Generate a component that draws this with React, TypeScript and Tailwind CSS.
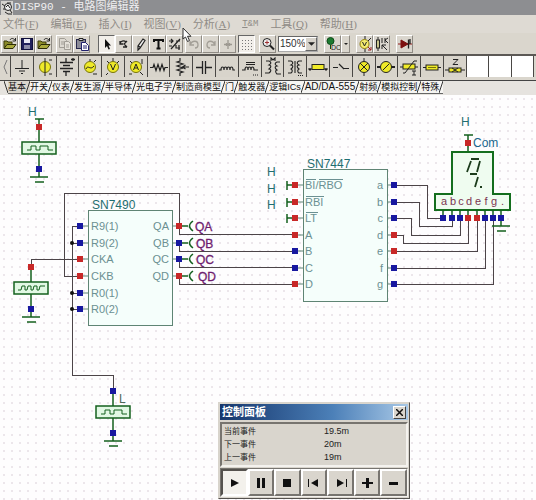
import { useState } from "react"
import type { ReactNode } from "react"
import { clsx } from "clsx"

const RED = "#c82828"
const BLUE = "#1818a0"
const WIRE = "#4c4448"
const GREEN = "#14601e"

const MENUS = [
  { label: "文件", hotkey: "F" },
  { label: "编辑", hotkey: "E" },
  { label: "插入", hotkey: "I" },
  { label: "视图", hotkey: "V" },
  { label: "分析", hotkey: "A" },
  { label: "T&M", hotkey: "" },
  { label: "工具", hotkey: "Q" },
  { label: "帮助", hotkey: "H" },
]

const TABS = [
  "基本",
  "开关",
  "仪表",
  "发生源",
  "半导体",
  "光电子学",
  "制造商模型",
  "门",
  "触发器",
  "逻辑ICs",
  "AD/DA-555",
  "射频",
  "模拟控制",
  "特殊",
]

/* ---------- toolbar icons, 16x16 ---------- */

function Icon({ children }: { children: ReactNode }) {
  return (
    <svg width="16" height="16" viewBox="0 0 16 16" fill="none" stroke="#222" className="shrink-0">
      {children}
    </svg>
  )
}

const openIcon = (
  <Icon>
    <path d="M2 12V5h3l1 1h4v2" fill="#8b8b2a" stroke="#3a3a08" />
    <path d="M2 12.500l3-4h9l-3 4z" fill="#a9a93c" stroke="#2c2c08" />
    <path d="M8 4c1-2 3-2 5 0M13.500 2v3h-3" />
  </Icon>
)
const saveIcon = (
  <Icon>
    <rect x="2.500" y="2.500" width="11" height="11" fill="#20205c" stroke="#10103c" />
    <rect x="5" y="3" width="6" height="4" fill="#e8e8f4" stroke="none" />
    <rect x="5" y="9" width="6" height="4" fill="#8c8ca8" stroke="none" />
  </Icon>
)
const copyIcon = (
  <Icon>
    <g stroke="#a19d95">
      <path d="M2.500 2.500h5l2 2v7h-7z" fill="#dedad2" />
      <path d="M7.500 5.500h4l2 2v6h-6z" fill="#e6e2da" />
      <path d="M4 6h3M4 8h3M9 9h3M9 11h3" />
    </g>
  </Icon>
)
const pasteIcon = (
  <Icon>
    <rect x="2.500" y="3.500" width="9" height="9" fill="#8c8c98" stroke="#26264c" />
    <path d="M5 2.500h4v2H5z" fill="#d8d8d8" />
    <path d="M7.500 6.500h4l3 3v5h-7z" fill="#fff" stroke="#20206c" />
    <path d="M9 10h4M9 12h4" stroke="#20206c" />
  </Icon>
)
const pointerIcon = (
  <Icon>
    <path d="M6 3v9l2-2 1.500 3.500 1.500-.6-1.500-3.300H12z" fill="#111" stroke="none" />
  </Icon>
)
const rotateIcon = (
  <Icon>
    <path d="M4 8c0-3 4-4 6-2M4 5v3h3M11 5l-3 3 3 3M7 11h4" strokeWidth="1.300" />
  </Icon>
)
const pencilIcon = (
  <Icon>
    <path d="M6 13l-1 1V10l5-7 2 1.500-5 7.500zM5.500 10l2 1.500" fill="#eee" strokeWidth="1.200" />
  </Icon>
)
const textIcon = (
  <Icon>
    <path d="M4 6V4h9v2M8.500 4v8M6.500 12.500h4" strokeWidth="2" stroke="#111" />
  </Icon>
)
const fractionIcon = (
  <Icon>
    <path d="M2 5h4M4 3l2 2-2 2M13 3L4 13M9 5h4M9 9v3h4M12 9v5M2 10h3" strokeWidth="1.200" />
  </Icon>
)
const undoIcon = (
  <Icon>
    <path d="M4 5v4h4M4 9c2-5 8-5 8 0 0 2-1 3-3 3" stroke="#a29e96" strokeWidth="1.300" />
  </Icon>
)
const redoIcon = (
  <Icon>
    <path d="M12 5v4H8M12 9C10 4 4 4 4 9c0 2 1 3 3 3" stroke="#a29e96" strokeWidth="1.300" />
  </Icon>
)
const moveIcon = (
  <Icon>
    <path d="M8 4v9M4 8.500h8M6.500 7v3M9.500 7v3" stroke="#9c9890" strokeWidth="1.300" />
  </Icon>
)
const gridIcon = (
  <Icon>
    <path d="M3 4.500h11M3 7.500h11M3 10.500h11M3 13.500h11" stroke="#777" strokeDasharray="1 2" />
  </Icon>
)
const magnifierIcon = (
  <Icon>
    <circle cx="7" cy="6.500" r="4" fill="#eee" />
    <path d="M5 6.500h4M7 4.500v4" stroke="#a03030" />
    <path d="M10 9.500l4 4" strokeWidth="2" />
  </Icon>
)
const dcIcon = (
  <Icon>
    <circle cx="5.500" cy="5" r="3.500" fill="#1c7a30" stroke="#0c4c18" />
    <path d="M5.500 9v4" stroke="#0c4c18" />
    <text x="6" y="14" fontSize="7" fill="#222" stroke="none">
      DC
    </text>
  </Icon>
)
const meterIcon = (
  <Icon>
    <path d="M8 0v3M8 13v3" />
    <circle cx="7.500" cy="8" r="4.500" fill="#f4ec70" stroke="#8c7c08" />
    <path d="M5.500 6l2 4 2-4M11 5l3-3" />
    <path d="M11 11l3 3M14 11v3h-3" stroke="#a02020" />
  </Icon>
)
const partIcon = (
  <Icon>
    <path d="M4 1v3M4 12v3" />
    <rect x="2.500" y="4" width="3" height="8" fill="#c8c48c" />
    <path d="M8 2v5M11 2v5M14 2l-3 2 3 3M8 9l5 5M8 13V9h4" />
  </Icon>
)
const diodeIcon = (
  <Icon>
    <path d="M1 8h14" stroke="#901818" />
    <path d="M4 4l7 4-7 4z" fill="#7c1010" stroke="#7c1010" />
    <path d="M11.500 3.500v9M13 3v5" stroke="#222" strokeWidth="1.300" />
  </Icon>
)

/* ---------- component palette icons, 22x20 ---------- */

const YELLOW = "#efea28"

const PARTS: { name: string; art: ReactNode }[] = [
  { name: "Ground", art: <path d="M11 3v8M4 11.500h14M8 14h6M10 16.500h2" /> },
  {
    name: "Voltage source",
    art: (
      <>
        <circle cx="11" cy="10" r="5.500" fill={YELLOW} stroke="#77740c" />
        <path d="M11 1v18M15 3h3M15 17h3" />
      </>
    ),
  },
  {
    name: "Battery",
    art: <path d="M10 1v4M4 5.500h13M7 8.500h7M4 11.500h13M7 14.500h7M10 15v4M15 2.500h4M17 1v3" strokeWidth="1.300" />,
  },
  {
    name: "Sine generator",
    art: (
      <>
        <circle cx="11" cy="10" r="5.500" fill={YELLOW} stroke="#77740c" />
        <path d="M7 12c2-5 4 2 8-3M15 5l2-2M14 17h4M11 2v2" />
      </>
    ),
  },
  {
    name: "Voltmeter",
    art: (
      <>
        <circle cx="11" cy="10" r="5.500" fill={YELLOW} stroke="#77740c" />
        <path d="M8.500 7l2.500 6 2.500-6M5 4l2 2M17 4l-2 2M11 1v3M6 16l-2 2" />
      </>
    ),
  },
  {
    name: "Ammeter",
    art: (
      <>
        <circle cx="11" cy="10" r="5.500" fill={YELLOW} stroke="#77740c" />
        <path d="M8.500 13L11 7l2.500 6M9.500 11h3M17 2v5M5 4l2 2M15 15l3 3M4 17h3" />
      </>
    ),
  },
  { name: "Resistor", art: <path d="M2 10.500h3l1-3 2 6 2-6 2 6 2-6 2 6 1-3h3" strokeWidth="1.200" /> },
  {
    name: "Potentiometer",
    art: <path d="M10 1v3l-3 1 6 2-6 2 6 2-6 2 6 2-3 1v3M19 10h-6M15.500 8l-3 2 3 2" strokeWidth="1.200" />,
  },
  { name: "Capacitor", art: <path d="M3 10.500h6M13 10.500h6M9.500 4v13M12.500 4v13" strokeWidth="1.300" /> },
  {
    name: "Inductor",
    art: <path d="M3 13h2c0-4 3-4 3 0 0-4 3-4 3 0 0-4 3-4 3 0 0-4 3-4 3 0h2" strokeWidth="1.200" />,
  },
  {
    name: "Iron core coil",
    art: (
      <>
        <path d="M7 5.500h9M7 7.500h9M3 13h3c0-4 3-4 3 0 0-4 3-4 3 0 0-4 3-4 3 0h4" strokeWidth="1.200" />
        <path d="M14 18h5" strokeDasharray="1 1" />
      </>
    ),
  },
  {
    name: "Coupled coils",
    art: <path d="M4 4h3c4 2 0 4 0 4 4 1 0 4 0 4 4 1 0 4 0 4H3M18 5h-3c-4 2 0 4 0 4-4 1 0 4 0 4-3 1 0 4 0 4h4M9 4V1l2 2 2-2v3" strokeWidth="1.100" />,
  },
  {
    name: "Transformer",
    art: (
      <>
        <path d="M4 4h3c4 2 0 4 0 4 4 1 0 4 0 4 3 2 0 4 0 4H4M18 4h-3c-4 2 0 4 0 4-4 1 0 4 0 4-3 2 0 4 0 4h3M11 4v12" strokeWidth="1.100" />
        <path d="M14 18.500h5" strokeDasharray="1 1" />
      </>
    ),
  },
  {
    name: "Fuse",
    art: (
      <>
        <path d="M1 12h20" />
        <rect x="5" y="7.500" width="12" height="5" fill={YELLOW} />
        <path d="M2 12.500h2M18 12.500h2" strokeWidth="2" />
      </>
    ),
  },
  { name: "Switch", art: <path d="M3 10.500h5M9 7l5 5M14 11.500h5" strokeWidth="1.200" /> },
  {
    name: "Lamp",
    art: (
      <>
        <circle cx="11" cy="10" r="5.500" fill={YELLOW} />
        <path d="M7 6l8 8M15 6l-8 8M11 1v3M11 16v3" />
      </>
    ),
  },
  {
    name: "Meter",
    art: (
      <>
        <path d="M2 10h18" strokeWidth="2" />
        <circle cx="11" cy="10" r="5.500" fill={YELLOW} />
        <path d="M8 13l6-6" />
      </>
    ),
  },
  {
    name: "Thermistor",
    art: (
      <>
        <path d="M2 10h18" />
        <rect x="5" y="7" width="12" height="5" fill={YELLOW} />
        <path d="M5 16h2L16 4h3M14 14h4M16 14v4M14 18h4" />
      </>
    ),
  },
  {
    name: "Relay coil",
    art: (
      <>
        <path d="M2 10.500h18" />
        <rect x="5" y="8" width="12" height="5" fill={YELLOW} />
        <path d="M7 10.500h8" stroke="#77740c" />
      </>
    ),
  },
  {
    name: "Impedance",
    art: (
      <>
        <path d="M1 13h20" />
        <rect x="5" y="11" width="12" height="4" fill={YELLOW} />
        <path d="M8 11l6 4M14 11l-6 4M9 2.500h5l-5 5h5" />
      </>
    ),
  },
]

/* ---------- shared controls ---------- */

interface ToolButtonProps {
  label: string
  pressed?: boolean
  children: ReactNode
}

function ToolButton({ label, pressed, children }: ToolButtonProps) {
  return (
    <button
      type="button"
      aria-label={label}
      className={clsx(
        "flex h-[18px] w-[17px] items-center justify-center overflow-hidden border",
        pressed
          ? "border-t-[#666] border-l-[#666] border-r-white border-b-white bg-[#f2efea]"
          : "border-t-white border-l-white border-r-[#8f8b84] border-b-[#8f8b84] bg-[#dad6ce]"
      )}
    >
      {children}
    </button>
  )
}

function TitleBar() {
  return (
    <header className="flex h-[15px] items-center bg-[#8d8e91] pl-px">
      <svg width="12" height="14" viewBox="0 0 12 14" fill="none" stroke="#222">
        <rect width="12" height="14" fill="#d4d2ce" stroke="none" />
        <path d="M1 3l3 2M2 8h3M4 11l3 2h4M6 2h4" />
        <circle cx="7" cy="6" r="3.500" fill="#f0f0f0" />
        <path d="M5 6l2-2 2 3M9 9l2 3" />
      </svg>
      <h1 className="pl-px font-['Liberation_Mono','Noto_Sans_CJK_SC',monospace] text-[11px] leading-[15px] whitespace-pre text-[#efeff0]">
        DISP90 - 电路图编辑器
      </h1>
    </header>
  )
}

function MenuBar() {
  return (
    <nav className="flex h-[18px] items-center gap-3 bg-[#dedad3] pl-[3px] font-['Liberation_Serif','Noto_Sans_CJK_SC',serif] text-[11px] leading-[16px] text-[#8f8b86]">
      {MENUS.map((menu) =>
        menu.hotkey ? (
          <button type="button" key={menu.label} className="whitespace-nowrap">
            {menu.label}(<u>{menu.hotkey}</u>)
          </button>
        ) : (
          <button type="button" key={menu.label} className="font-['Liberation_Mono',monospace] text-[9px]">
            <u>T</u>&amp;M
          </button>
        )
      )}
    </nav>
  )
}

function Toolbar() {
  const [zoom, setZoom] = useState("150%")

  return (
    <div className="flex h-[21px] items-center bg-[#dad6cd] pl-px">
      <div className="flex">
        <ToolButton label="打开">{openIcon}</ToolButton>
        <ToolButton label="保存">{saveIcon}</ToolButton>
        <ToolButton label="关闭">{openIcon}</ToolButton>
      </div>
      <div className="ml-1 flex">
        <ToolButton label="复制">{copyIcon}</ToolButton>
        <ToolButton label="粘贴">{pasteIcon}</ToolButton>
      </div>
      <div className="ml-2 flex">
        <ToolButton label="选择" pressed>{pointerIcon}</ToolButton>
        <ToolButton label="旋转">{rotateIcon}</ToolButton>
        <ToolButton label="连线">{pencilIcon}</ToolButton>
        <ToolButton label="文本">{textIcon}</ToolButton>
        <ToolButton label="镜像">{fractionIcon}</ToolButton>
      </div>
      <div className="ml-0.5 flex">
        <ToolButton label="撤销">{undoIcon}</ToolButton>
        <ToolButton label="重做">{redoIcon}</ToolButton>
        <ToolButton label="移动">{moveIcon}</ToolButton>
      </div>
      <div className="ml-0.5 flex gap-1">
        <ToolButton label="网格" pressed>{gridIcon}</ToolButton>
        <ToolButton label="缩放">{magnifierIcon}</ToolButton>
      </div>
      <div className="relative ml-0.5 flex h-4 w-10 border border-t-[#666] border-l-[#666] border-r-[#aaa] border-b-[#aaa] bg-white">
        <select
          aria-label="缩放比例"
          value={zoom}
          onChange={(e) => setZoom(e.target.value)}
          className="w-full appearance-none bg-transparent pl-px text-[10px] leading-[14px] text-[#333]"
        >
          <option>100%</option>
          <option>150%</option>
          <option>200%</option>
        </select>
        <span className="pointer-events-none absolute inset-y-0 right-0 flex w-3 items-center justify-center border border-t-white border-l-white border-r-[#666] border-b-[#666] bg-[#d6d2ca]">
          <svg width="7" height="4" viewBox="0 0 8 4">
            <path d="M0 0h8L4 4z" fill="#222" />
          </svg>
        </span>
      </div>
      <div className="ml-1.5 flex">
        <ToolButton label="DC">{dcIcon}</ToolButton>
        <button
          type="button"
          aria-label="更多"
          className="flex h-[18px] w-[9px] items-center justify-center border border-t-white border-l-white border-r-[#8f8b84] border-b-[#8f8b84]"
        >
          <svg width="4" height="2" viewBox="0 0 4 2">
            <path d="M0 0h4L2 2z" fill="#222" />
          </svg>
        </button>
      </div>
      <div className="ml-1.5 flex">
        <ToolButton label="仪表">{meterIcon}</ToolButton>
        <ToolButton label="元件">{partIcon}</ToolButton>
      </div>
      <div className="ml-1.5 flex">
        <ToolButton label="二极管">{diodeIcon}</ToolButton>
      </div>
    </div>
  )
}

function PartPalette() {
  return (
    <div className="flex border-t-2 border-[#5c5955] bg-[#dad6cd] pb-[3px]">
      <button type="button" aria-label="向左" className="flex h-[21px] w-[10px] shrink-0 items-center justify-center">
        <svg width="5" height="14" viewBox="0 0 5 14" fill="none" stroke="#777">
          <path d="M4 0L1 7l3 7" />
        </svg>
      </button>
      <div className="grid flex-1 grid-cols-[repeat(23,minmax(0,1fr))] pr-0.5">
        {PARTS.map((part) => (
          <button
            type="button"
            key={part.name}
            aria-label={part.name}
            className="flex h-[21px] items-center justify-center overflow-hidden border-l border-[#4a4845] bg-[#d8d4cb]"
          >
            <svg width="22" height="20" viewBox="0 0 22 20" fill="none" stroke="#222" className="shrink-0">
              {part.art}
            </svg>
          </button>
        ))}
        <div className="border-l border-[#4a4845] bg-white" />
        <div className="border-l border-[#4a4845] bg-white" />
        <div className="border-x border-[#4a4845] bg-white" />
      </div>
    </div>
  )
}

function TabStrip() {
  const [active, setActive] = useState(TABS[0])

  return (
    <div role="tablist" className="flex h-[15px] border-t border-[#444] bg-[#e6e3df] pl-1">
      <svg width="4" height="12" viewBox="0 0 4 12" fill="none" stroke="#333" className="shrink-0">
        <path d="M0 0l4 12" />
      </svg>
      {TABS.map((tab) => (
        <button
          type="button"
          role="tab"
          key={tab}
          aria-selected={tab === active}
          onClick={() => setActive(tab)}
          className="flex h-[13px] shrink-0 items-center border-b border-[#666] bg-[#f6f5f3] aria-selected:bg-[#dad6cd]"
        >
          <span
            className={clsx(
              "leading-[12px] whitespace-nowrap text-[#111]",
              tab === "AD/DA-555" ? "text-[10px]" : "text-[9px]"
            )}
          >
            {tab}
          </span>
          <svg width="4" height="12" viewBox="0 0 4 12" fill="none" stroke="#333" className="shrink-0">
            <path d="M4 0L0 12" />
          </svg>
        </button>
      ))}
    </div>
  )
}

/* ---------- schematic ---------- */

function Node({ x, y, high }: { x: number; y: number; high?: boolean }) {
  return <rect x={x - 3} y={y - 3} width="6" height="6" fill={high ? RED : BLUE} />
}

function Ground({ x, y }: { x: number; y: number }) {
  return <path d={`M${x - 9} ${y}h18M${x - 4} ${y + 5}h9`} stroke={GREEN} strokeWidth="1.500" />
}

interface ClockProps {
  x: number
  y: number
  high?: boolean
  fast?: boolean
}

// y is the top edge of the generator's box
function Clock({ x, y, high, fast }: ClockProps) {
  return (
    <g stroke={GREEN} fill="none">
      <path d={`M${x} ${y - 15}v15M${x} ${y + 12}v23`} strokeWidth="1.500" />
      <rect x={x - 17} y={y} width="34" height="12" fill="#e2f8e4" strokeWidth="1.500" />
      <path
        d={
          fast
            ? `M${x - 13} ${y + 8}h3l1-4h3v4h2l1-4h3v4h2l1-4h3v4h2l1-4h5`
            : `M${x - 12} ${y + 8}h4v-4h5v4h4v-4h8v4h5`
        }
      />
      <g stroke="none">
        <Node x={x} y={y - 15} high={high} />
        <Node x={x} y={y + 27} />
      </g>
      <Ground x={x} y={y + 35} />
    </g>
  )
}

const COUNTER_INPUTS = [
  { label: "R9(1)", y: 226, high: false },
  { label: "R9(2)", y: 243, high: false },
  { label: "CKA", y: 259, high: true },
  { label: "CKB", y: 276, high: true },
  { label: "R0(1)", y: 293, high: false },
  { label: "R0(2)", y: 309, high: false },
]

const COUNTER_OUTPUTS = [
  { label: "QA", y: 226, high: true, tagX: 195 },
  { label: "QB", y: 243, high: false, tagX: 196 },
  { label: "QC", y: 259, high: false, tagX: 196 },
  { label: "QD", y: 276, high: true, tagX: 198 },
]

const DECODER_INPUTS = [
  { label: "A", y: 235, high: true },
  { label: "B", y: 251, high: false },
  { label: "C", y: 268, high: false },
  { label: "D", y: 284, high: true },
]

const SEGMENTS = [
  { label: "a", y: 185, pinX: 443, high: false, wire: "M394 185H427V218H443" },
  { label: "b", y: 202, pinX: 452, high: false, wire: "M394 202H419V226H452V218" },
  { label: "c", y: 218, pinX: 460, high: false, wire: "M394 218H411V235H460V218" },
  { label: "d", y: 235, pinX: 468, high: true, wire: "M394 235H403V243H468V218" },
  { label: "e", y: 251, pinX: 477, high: true, wire: "M394 251H477V218" },
  { label: "f", y: 268, pinX: 485, high: false, wire: "M394 268H485V218" },
  { label: "g", y: 284, pinX: 493, high: false, wire: "M394 284H493V218" },
]

function Schematic() {
  return (
    <svg
      width="536"
      height="405"
      viewBox="0 95 536 405"
      fill="none"
      className="block font-['Liberation_Sans',sans-serif] text-[11px]"
    >
      {/* wires */}
      <g stroke={WIRE} shapeRendering="crispEdges">
        <path d="M80 226H72V375H113V391M72 243H80M72 293H80M72 309H80" />
        <path d="M80 259H31V267" />
        <path d="M80 276H64V193H179V226" />
        {COUNTER_OUTPUTS.map((pin) => (
          <path key={pin.label} d={`M179 ${pin.y}v8H295`} />
        ))}
        {SEGMENTS.map((seg) => (
          <path key={seg.label} d={seg.wire} />
        ))}
      </g>
      <g fill="#111">
        <circle cx="72" cy="243" r="2" />
        <circle cx="72" cy="293" r="2" />
        <circle cx="72" cy="309" r="2" />
      </g>

      {/* generators */}
      <path d="M35 119h9M39 119v8" stroke={GREEN} strokeWidth="1.500" />
      <Clock x={39} y={142} high />
      <Clock x={31} y={282} high fast />
      <Clock x={113} y={406} />
      <g fill="#1f6e70" fontSize="12">
        <text x="28" y="116">H</text>
        <text x="461" y="126">H</text>
        <text x="267" y="176">H</text>
        <text x="267" y="193">H</text>
        <text x="267" y="209">H</text>
      </g>
      <text x="119" y="403" fontSize="12" fill="#4c6858">L</text>

      {/* SN7490 */}
      <rect x="88" y="210" width="84" height="115" fill="#f5fefb" stroke="#5f8474" shapeRendering="crispEdges" />
      <text x="92" y="209" fontSize="12" fill="#1f6e70">SN7490</text>
      {COUNTER_INPUTS.map((pin) => (
        <g key={pin.label}>
          <path d={`M80 ${pin.y}h8`} stroke="#5f8474" />
          <Node x={80} y={pin.y} high={pin.high} />
          <text x="91" y={pin.y + 4} fill="#6b9092">{pin.label}</text>
        </g>
      ))}
      {COUNTER_OUTPUTS.map((pin) => (
        <g key={pin.label}>
          <path d={`M172 ${pin.y}h7`} stroke="#5f8474" />
          <path d={`M182 ${pin.y}h6M193 ${pin.y - 5}q-7 5 0 10`} stroke={GREEN} strokeWidth="1.500" />
          <Node x={179} y={pin.y} high={pin.high} />
          <text x="169" y={pin.y + 4} textAnchor="end" fill="#6b9092">{pin.label}</text>
          <text x={pin.tagX} y={pin.y + 5} fontSize="12" fill="#6e1c6e" stroke="#6e1c6e" strokeWidth="0.300">
            {pin.label}
          </text>
        </g>
      ))}

      {/* SN7447 */}
      <rect x="303" y="169" width="84" height="132" fill="#f5fefb" stroke="#5f8474" shapeRendering="crispEdges" />
      <text x="307" y="168" fontSize="12" fill="#1f6e70">SN7447</text>
      {[185, 202, 218].map((y) => (
        <g key={y}>
          <path d={`M287 ${y - 4}v9M287 ${y}h8`} stroke={GREEN} strokeWidth="1.500" />
          <path d={`M295 ${y}h8`} stroke="#5f8474" />
          <Node x={295} y={y} high />
        </g>
      ))}
      <g fill="#6b9092">
        <text x="305" y="189">BI/RBO</text>
        <text x="305" y="206">RBI</text>
        <text x="305" y="222">LT</text>
      </g>
      <path d="M306 179.500h10M319 179.500h24M306 196.500h18M306 212.500h12" stroke="#6b9092" />
      {DECODER_INPUTS.map((pin) => (
        <g key={pin.label}>
          <path d={`M295 ${pin.y}h8`} stroke="#5f8474" />
          <Node x={295} y={pin.y} high={pin.high} />
          <text x="305" y={pin.y + 4} fill="#6b9092">{pin.label}</text>
        </g>
      ))}

      {/* seven segment display */}
      <path d="M464 135h9M468 135v17" stroke={GREEN} strokeWidth="1.500" />
      <Node x={468} y={143} high />
      <text x="473" y="147" fontSize="12" fill="#1a668c">Com</text>
      <path d="M452 152h41v42h17v16h-75v-16h17z" fill="#effcf0" stroke="#146e1e" strokeWidth="2" />
      <path
        d="M471 159h8M471 161l-4 11M480 161l-3 11M470 174h7M478 177l-3 10M480 187h2"
        stroke="#1c3c1c"
        strokeWidth="1.800"
      />
      {SEGMENTS.map((seg) => (
        <g key={seg.label}>
          <path d={`M387 ${seg.y}h7`} stroke="#5f8474" />
          <Node x={394} y={seg.y} high={seg.high} />
          <text x="383" y={seg.y + 4} textAnchor="end" fill="#6b9092">{seg.label}</text>
          <path d={`M${seg.pinX} 210v6`} stroke={GREEN} strokeWidth="1.500" />
          <Node x={seg.pinX} y={218} high={seg.high} />
          <text x={seg.pinX + 1} y="205" textAnchor="middle" fill="#7c3450">{seg.label}</text>
        </g>
      ))}
      <text x="501" y="205" fill="#7c3450">.</text>
      <path d="M501 210v16" stroke={GREEN} strokeWidth="1.500" />
      <Node x={501} y={218} />
      <Ground x={501} y={226} />
    </svg>
  )
}

/* ---------- floating control panel ---------- */

const EVENTS = [
  { label: "当前事件", value: "19.5m" },
  { label: "下一事件", value: "20m" },
  { label: "上一事件", value: "19m" },
]

const TRANSPORT = [
  { name: "播放", path: "M5 4l8 4-8 4z" },
  { name: "暂停", path: "M4 3h3v10H4zM9 3h3v10H9z" },
  { name: "停止", path: "M4 4h8v8H4z" },
  { name: "后退", path: "M2 4h1v8H2zM12 4v8L5 8z" },
  { name: "前进", path: "M13 4h1v8h-1zM4 4v8l7-4z" },
  { name: "加速", path: "M7 3h3v4h4v2h-4v4H7V9H3V7h4z" },
  { name: "减速", path: "M3 7h9v3H3z" },
]

function ControlPanel() {
  const [pressed, setPressed] = useState("播放")

  return (
    <section className="absolute top-[307px] left-[218px] w-[192px] border border-t-[#d8d4cc] border-l-[#d8d4cc] border-r-[#55524e] border-b-[#55524e] bg-[#d9d5cd] p-px">
      <div className="flex h-4 items-center justify-between bg-linear-to-r from-[#16366c] via-[#4c80b8] via-60% to-[#a8c8e6] px-0.5">
        <h2 className="text-[11px] leading-[16px] font-bold text-white">控制面板</h2>
        <button
          type="button"
          aria-label="关闭"
          className="flex h-[13px] w-[13px] items-center justify-center border border-t-white border-l-white border-r-[#444] border-b-[#444] bg-[#d9d5cd]"
        >
          <svg width="7" height="7" viewBox="0 0 7 7" stroke="#111" strokeWidth="1.500">
            <path d="M0 0l7 7M7 0L0 7" />
          </svg>
        </button>
      </div>
      <dl className="mt-0.5 grid grid-cols-[100px_1fr] border-2 border-t-[#77746f] border-l-[#77746f] border-r-[#f4f2ee] border-b-[#f4f2ee] py-px pl-0.5 text-[9px] leading-[13px] text-[#222]">
        {EVENTS.map((event) => (
          <div key={event.label} className="contents">
            <dt className="text-[8px]">{event.label}</dt>
            <dd>{event.value}</dd>
          </div>
        ))}
      </dl>
      <div className="mt-px flex border border-t-[#77746f] border-l-[#77746f] border-r-[#f4f2ee] border-b-[#f4f2ee]">
        {TRANSPORT.map((item) => (
          <button
            type="button"
            key={item.name}
            aria-label={item.name}
            aria-pressed={item.name === pressed}
            onClick={() => setPressed(item.name)}
            className="flex h-[27px] flex-1 items-center justify-center border-2 border-t-white border-l-white border-r-[#77746f] border-b-[#77746f] aria-pressed:border-t-[#55524e] aria-pressed:border-l-[#55524e] aria-pressed:border-r-white aria-pressed:border-b-white aria-pressed:bg-[#f3f1ec]"
          >
            <svg width="16" height="16" viewBox="0 0 16 16" fill="#111">
              <path d={item.path} />
            </svg>
          </button>
        ))}
      </div>
    </section>
  )
}

export default function App() {
  return (
    <div className="relative flex h-screen flex-col overflow-hidden bg-[#fefdfe] font-['Liberation_Sans','Noto_Sans_CJK_SC',sans-serif]">
      <TitleBar />
      <MenuBar />
      <Toolbar />
      <PartPalette />
      <TabStrip />
      <main className="relative flex-1 overflow-hidden bg-[radial-gradient(circle_at_center,#ece6eb_1px,transparent_1px)] bg-size-[8px_8px]">
        <Schematic />
        <ControlPanel />
      </main>
      <svg width="10" height="16" viewBox="0 0 10 16" className="absolute top-[27px] left-[182px]">
        <path d="M1 1v11l2.500-2 2 4.500 2-1-2-4.200H9z" fill="#fff" stroke="#333" />
      </svg>
    </div>
  )
}
